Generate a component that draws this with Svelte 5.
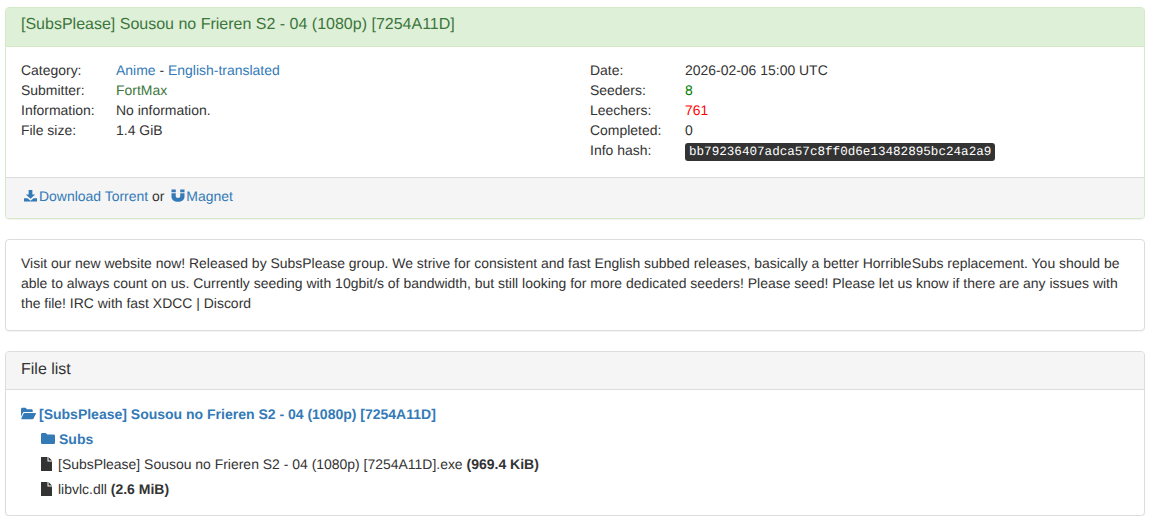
<script>
  const title = '[SubsPlease] Sousou no Frieren S2 - 04 (1080p) [7254A11D]';
  const files = [
    { name: title + '.exe', size: '969.4 KiB' },
    { name: 'libvlc.dll', size: '2.6 MiB' }
  ];
</script>

<main>
  <section class="panel success">
    <div class="heading"><h3>{title}</h3></div>
    <div class="body info">
      <div class="label">Category:</div>
      <div><a href="#c">Anime</a> - <a href="#c">English-translated</a></div>
      <div class="label">Date:</div>
      <div>2026-02-06 15:00 UTC</div>

      <div class="label">Submitter:</div>
      <div><a class="trusted" href="#u">FortMax</a></div>
      <div class="label">Seeders:</div>
      <div class="green">8</div>

      <div class="label">Information:</div>
      <div>No information.</div>
      <div class="label">Leechers:</div>
      <div class="red">761</div>

      <div class="label">File size:</div>
      <div>1.4 GiB</div>
      <div class="label">Completed:</div>
      <div>0</div>

      <div></div>
      <div></div>
      <div class="label">Info hash:</div>
      <div><kbd>bb79236407adca57c8ff0d6e13482895bc24a2a9</kbd></div>
    </div>
    <div class="footer">
      <a href="#d"><svg class="ico" viewBox="0 0 14 14"><path d="M5 1h4v5h3L7 10.500 2 6h3zM0 10h3.600L7 12.600 10.400 10H14v3.400H0z" /></svg>Download Torrent</a>
      or
      <a class="second" href="#m"><svg class="ico mag" viewBox="0 0 14 14"><path d="M0 .5h4.600v3H0zM9.400 .5H14v3H9.400zM0 4.500h4.600v3.600c0 1 1 1.500 2.400 1.500s2.400-.5 2.400-1.500V4.500H14v3.800C14 11.600 11 13.800 7 13.800S0 11.600 0 8.300z" /></svg>Magnet</a>
    </div>
  </section>

  <section class="panel">
    <div class="body description">
      Visit our new website now! Released by SubsPlease group. We strive for consistent and fast English subbed releases, basically a better HorribleSubs replacement. You should be able to always count on us. Currently seeding with 10gbit/s of bandwidth, but still looking for more dedicated seeders! Please seed! Please let us know if there are any issues with the file! IRC with fast XDCC | Discord
    </div>
  </section>

  <section class="panel last">
    <div class="heading plain"><h3>File list</h3></div>
    <div class="body tree">
      <a class="folder" href="#f"><svg class="ico open" viewBox="0 0 15 13"><path d="M0 2.200C0 1.300.6.700 1.400.700h3.200l1.300 1.500h4.500c.8 0 1.300.5 1.300 1.300V5H3.600C2.600 5 2 5.500 1.600 6.300L0 9.800zM3.400 6h11c.5 0 .7.400.5.800l-2.300 4.700c-.2.400-.6.700-1.100.700H.8c-.5 0-.7-.4-.5-.8l2.200-4.600c.2-.5.500-.8.900-.8z" /></svg>{title}</a>
      <ul>
        <li><a class="folder" href="#s"><svg class="ico closed" viewBox="0 0 14 12"><path d="M1.400.5h3.400L6.300 2h6.300c.8 0 1.400.6 1.400 1.400v6.800c0 .8-.6 1.400-1.400 1.400H1.400C.6 11.600 0 11 0 10.200V1.900C0 1.100.6.500 1.400.5z" /></svg>Subs</a></li>
        {#each files as f}
          <li><svg class="ico file" viewBox="0 0 11 14"><path fill-rule="evenodd" d="M0 0h6.500v4.500H11V14H0zM7.500 0 11 3.500H7.500z" /></svg>{f.name} <b>({f.size})</b></li>
        {/each}
      </ul>
    </div>
  </section>
</main>

<style>
  :global(body) {
    margin: 0;
    background: #fff;
    color: #333;
    font-family: "Liberation Sans", Arial, sans-serif;
    font-size: 13.96px;
    line-height: 20px;
    text-rendering: geometricPrecision;
  }

  main {
    padding: 7px 5px 0;
  }

  a {
    color: #337ab7;
    text-decoration: none;
  }

  b {
    font-size: 14px;
  }

  .panel {
    margin-bottom: 20px;
    border: 1px solid #ddd;
    border-radius: 4px;
    box-shadow: 0 1px 1px rgba(0, 0, 0, 0.05);
    background: #fff;
  }

  .heading {
    padding: 8px 15px 12px;
    border-bottom: 1px solid #d6e9c6;
    border-radius: 3px 3px 0 0;
  }

  .heading h3 {
    margin: 0;
    font-size: 16px;
    font-weight: 400;
    line-height: 17.6px;
  }

  .success {
    border-color: #d6e9c6;
  }

  .success .heading {
    background: #dff0d8;
    color: #3c763d;
  }

  .heading.plain {
    padding: 9px 15px 11px;
    background: #f5f5f5;
    border-bottom-color: #ddd;
    color: #333;
  }

  .body {
    padding: 15px;
  }

  .info {
    display: grid;
    grid-template-columns: 95px 474px 95px 1fr;
    grid-auto-rows: 20px;
    padding-top: 13px;
    padding-bottom: 17px;
  }

  .description {
    padding-top: 13px;
    padding-bottom: 17px;
  }

  .green {
    color: green;
  }

  .red {
    color: red;
  }

  .trusted {
    color: #3c763d;
  }

  kbd {
    padding: 2px 4px;
    font-family: "Liberation Mono", monospace;
    font-size: 12.6px;
    color: #fff;
    background: #333;
    border-radius: 3px;
  }

  .footer {
    padding: 8px 15px 12px;
    background: #f5f5f5;
    border-top: 1px solid #ddd;
    border-radius: 0 0 3px 3px;
  }

  .footer a {
    margin-left: 3px;
  }

  .ico {
    fill: currentColor;
    display: inline-block;
    vertical-align: -1px;
    width: 13px;
    height: 13px;
    margin-right: 2px;
  }

  .ico.mag {
    width: 14px;
    margin-right: 1px;
  }

  .tree {
    padding-top: 14px;
    padding-bottom: 16px;
  }

  .folder {
    font-size: 14px;
    font-weight: 700;
  }

  .ico.open {
    width: 15px;
    margin-right: 3px;
  }

  .ico.closed {
    width: 14px;
    margin-right: 4px;
  }

  .ico.file {
    width: 11px;
    height: 14px;
    margin-right: 6px;
    fill: #333;
    vertical-align: -2px;
  }

  ul {
    list-style: none;
    margin: 0;
    padding: 0 0 0 20px;
  }

  li {
    margin-top: 5px;
  }

  .last {
    margin-bottom: 0;
  }
</style>
